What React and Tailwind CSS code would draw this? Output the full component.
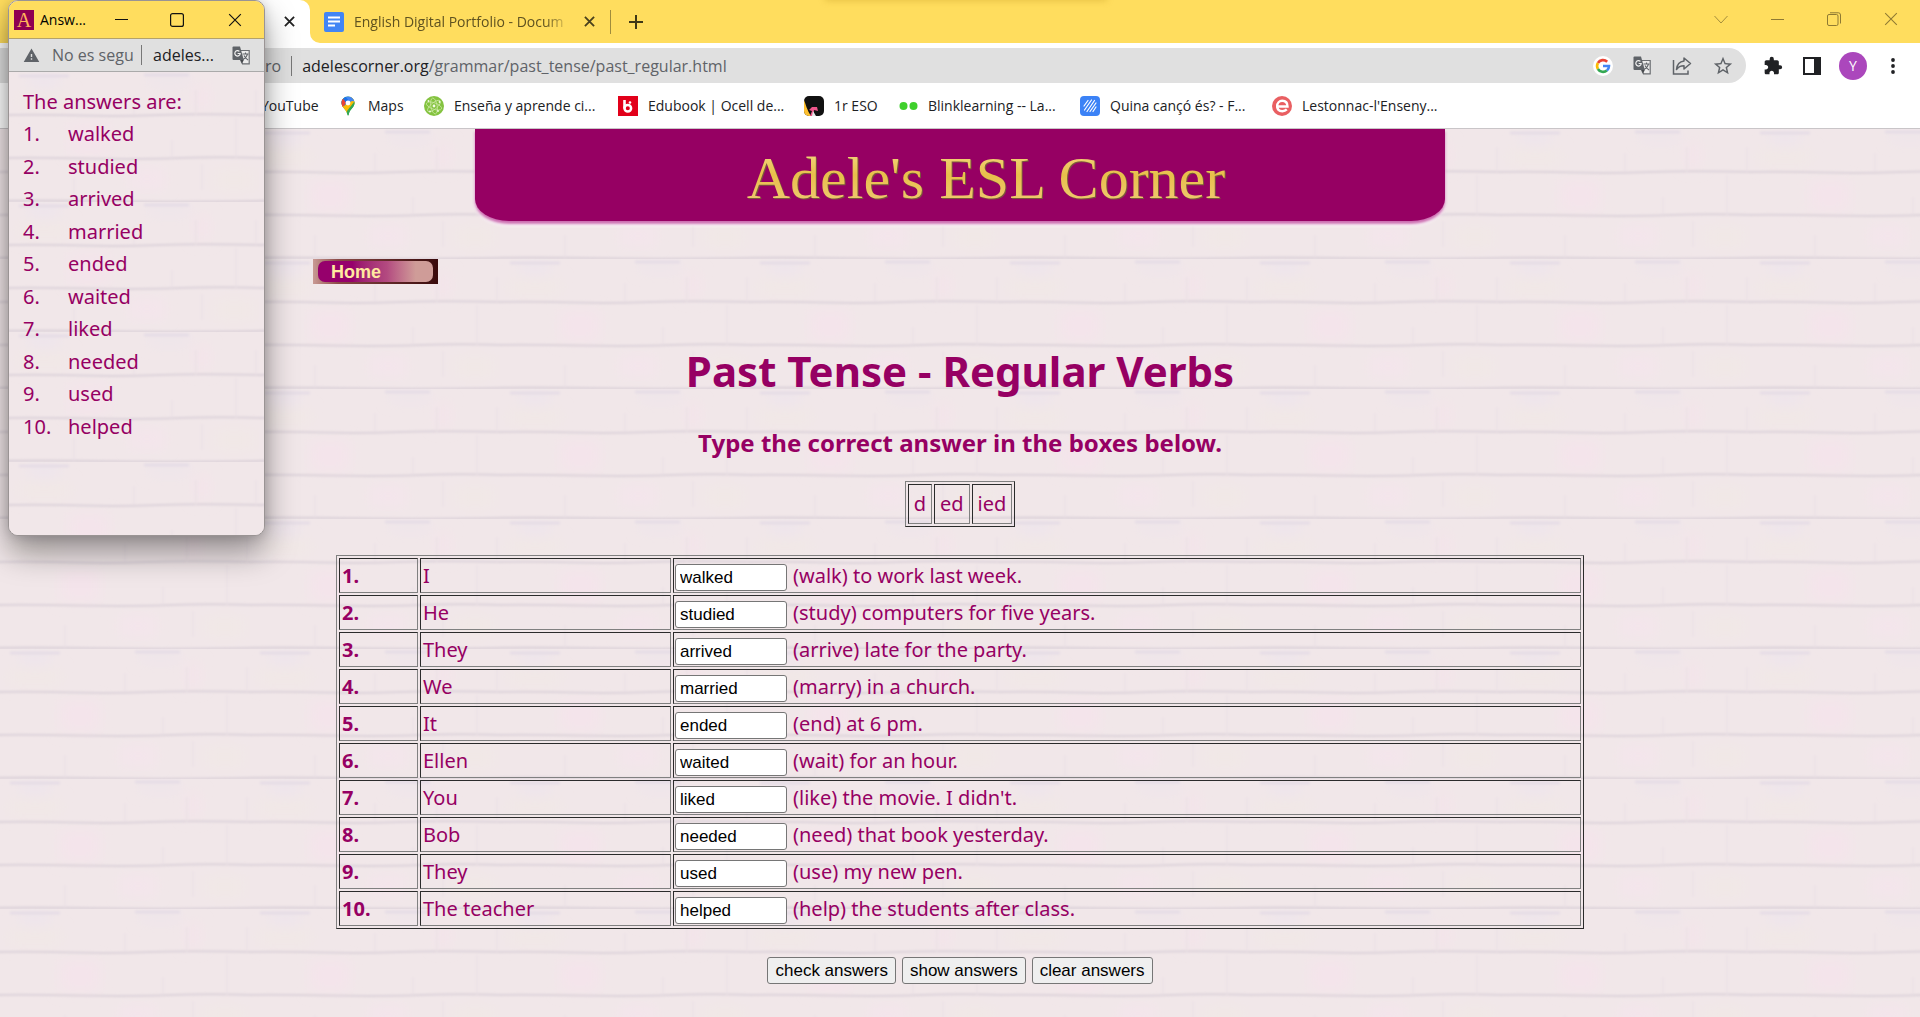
import React from 'react';
import { MdWarning, MdStarBorder, MdExtension } from 'react-icons/md';

const COMIC = "font-['Comic_Sans_MS','Noto_Sans',sans-serif]";
const UI = "font-['Segoe_UI','Open_Sans',sans-serif]";
const FORM = "font-['Liberation_Sans',Arial,sans-serif]";

const QUESTIONS = [
  ['I', 'walked', '(walk) to work last week.'],
  ['He', 'studied', '(study) computers for five years.'],
  ['They', 'arrived', '(arrive) late for the party.'],
  ['We', 'married', '(marry) in a church.'],
  ['It', 'ended', '(end) at 6 pm.'],
  ['Ellen', 'waited', '(wait) for an hour.'],
  ['You', 'liked', "(like) the movie. I didn't."],
  ['Bob', 'needed', '(need) that book yesterday.'],
  ['They', 'used', '(use) my new pen.'],
  ['The teacher', 'helped', '(help) the students after class.'],
];

/* Whitewashed brick wall used behind both documents. */
function Wall({ id }) {
  return (
    <svg className="absolute inset-0 h-full w-full" aria-hidden="true">
      <defs>
        <filter id={id + '-soft'} x="-5%" y="-5%" width="110%" height="110%">
          <feGaussianBlur stdDeviation="1.3" />
        </filter>
        <filter id={id + '-haze'} x="-50%" y="-50%" width="200%" height="200%">
          <feGaussianBlur stdDeviation="7" />
        </filter>
        <pattern id={id} width="250" height="130" patternUnits="userSpaceOnUse">
          <rect width="250" height="130" fill="#f1e7e9" />
          <g filter={`url(#${id}-haze)`}>
            <rect x="60" y="52" width="40" height="30" fill="#f4e4eb" />
            <rect x="186" y="14" width="14" height="24" fill="#f4e4ea" />
            <rect x="20" y="4" width="30" height="10" fill="#ede4ee" />
            <rect x="140" y="4" width="40" height="8" fill="#ede4ec" />
            <rect x="120" y="98" width="36" height="18" fill="#f4e5ec" />
            <rect x="205" y="98" width="40" height="20" fill="#f1e8e6" />
            <rect x="10" y="20" width="50" height="16" fill="#f1e8e6" />
          </g>
          <g filter={`url(#${id}-soft)`} fill="none" stroke="#ddd3da">
            <path d="M-5 43Q40 42.500 75 43.500T150 43T255 43" strokeWidth="2" />
            <path d="M-5 86Q30 85.500 80 86.500T170 86T255 86" strokeWidth="2" />
            <path d="M-5 129Q50 128.500 110 129.500T255 129" strokeWidth="2.500" />
            <path d="M10 4H60M135 3H180" strokeWidth="3" stroke="#e6dde6" />
            <g stroke="#e9dfe4" strokeWidth="1.200">
              <path d="M247 18V43M125 24V43M187 18V43M227 46V86M163 68V86M65 106V129M193 92V118" />
            </g>
          </g>
        </pattern>
      </defs>
      <rect width="100%" height="100%" fill={`url(#${id})`} />
    </svg>
  );
}

function Cross({ size = 12, width = 2, color = '#3c3a33' }) {
  return (
    <svg width={size} height={size} viewBox="0 0 12 12" stroke={color} strokeWidth={width} fill="none" aria-hidden="true">
      <path d="M1 1L11 11M11 1L1 11" />
    </svg>
  );
}

function TranslateIcon() {
  return (
    <svg width="19" height="19" viewBox="0 0 19 19" aria-hidden="true">
      <path d="M8 4.500H17.200V17.800H10.500L8 13" fill="#ececec" stroke="#6b6e72" strokeWidth="1.200" />
      <path d="M10.500 8H16.500M13.500 6.500V8M15.500 8C14.800 11 13 12.500 11 13.500M12 9.500C13 11.500 14.500 13 16 14" fill="none" stroke="#5f6368" strokeWidth="1.100" />
      <path d="M1.500 0.500H8L11.800 14H1.500Q0.500 14 0.500 13V1.500Q0.500 0.500 1.500 0.500Z" fill="#5f6368" />
      <path d="M8.600 14H11.800L10 17.600Z" fill="#44474b" />
      <path d="M7.400 5.400A2.700 2.700 0 1 0 8.200 7.500H5.600" fill="none" stroke="#f1f1f1" strokeWidth="1.200" />
    </svg>
  );
}

function DocsIcon() {
  return (
    <svg width="20" height="20" viewBox="0 0 20 20" aria-hidden="true">
      <rect width="20" height="20" rx="2" fill="#4285f4" />
      <path d="M4 5.500H16M4 9.500H16M4 13.500H11" stroke="#fff" strokeWidth="1.800" />
    </svg>
  );
}

function MapsIcon() {
  return (
    <svg width="20" height="20" viewBox="0 0 20 20" aria-hidden="true">
      <defs>
        <clipPath id="pin"><path d="M10 0.500C6 0.500 3.500 3.600 3.500 7C3.500 11.500 8.500 13 9.300 18.600C9.500 19.800 10.500 19.800 10.700 18.600C11.500 13 16.500 11.500 16.500 7C16.500 3.600 14 0.500 10 0.500Z" /></clipPath>
      </defs>
      <g clipPath="url(#pin)">
        <rect width="20" height="20" fill="#34a853" />
        <path d="M0 14L14 -2L20 -2L20 4L7 18L0 18Z" fill="#fbbc04" />
        <path d="M6 -1H20V6L14 5L10 7Z" fill="#4285f4" />
        <path d="M0 0H7L11 5L6 10L0 5Z" fill="#1a73e8" />
        <path d="M0 4L5.500 3L8 7L4 12L0 11Z" fill="#ea4335" />
        <path d="M20 5L16 6L9 15L10 20H20Z" fill="#34a853" />
      </g>
      <circle cx="10" cy="7" r="2.400" fill="#fff" />
    </svg>
  );
}

function AtomIcon() {
  return (
    <svg width="20" height="20" viewBox="0 0 20 20" aria-hidden="true">
      <circle cx="10" cy="10" r="10" fill="#84c340" />
      <g fill="none" stroke="#c9e6a0" strokeWidth="0.800">
        <ellipse cx="10" cy="10" rx="8" ry="3.200" transform="rotate(20 10 10)" />
        <ellipse cx="10" cy="10" rx="8" ry="3.200" transform="rotate(80 10 10)" />
        <ellipse cx="10" cy="10" rx="8" ry="3.200" transform="rotate(140 10 10)" />
      </g>
      <g fill="#f2fae4">
        <circle cx="10" cy="10" r="1.400" /><circle cx="4.500" cy="5" r="0.900" /><circle cx="15.500" cy="6" r="0.900" /><circle cx="6" cy="15.500" r="0.900" /><circle cx="14" cy="15" r="0.900" />
      </g>
    </svg>
  );
}

function EdubookIcon() {
  return (
    <svg width="20" height="20" viewBox="0 0 20 20" aria-hidden="true">
      <rect width="20" height="20" fill="#e2001a" />
      <path d="M6.500 4V12.500" stroke="#fff" strokeWidth="2.600" />
      <circle cx="9.800" cy="12.300" r="3.300" fill="none" stroke="#fff" strokeWidth="2.500" />
      <circle cx="12" cy="6.500" r="1.300" fill="#fff" />
    </svg>
  );
}

function EsoIcon() {
  return (
    <svg width="20" height="20" viewBox="0 0 20 20" aria-hidden="true">
      <defs><clipPath id="eso"><rect width="20" height="20" rx="5" /></clipPath></defs>
      <g clipPath="url(#eso)">
        <rect width="20" height="20" fill="#111" />
        <path d="M0 4C2 9 3 14 7 20H0Z" fill="#fdc02f" />
        <path d="M5 14L8 11L13 11L14 15L10 14L9 20H6L8 15Z" fill="#f0568c" />
        <path d="M9 15L12 20H8Z" fill="#e8e8e8" />
      </g>
    </svg>
  );
}

function BlinkIcon() {
  return (
    <svg width="20" height="20" viewBox="0 0 20 20" aria-hidden="true">
      <circle cx="5.500" cy="10" r="4" fill="#3fd02c" />
      <circle cx="15.500" cy="10" r="4" fill="#3fd02c" />
    </svg>
  );
}

function StripesIcon() {
  return (
    <svg width="20" height="20" viewBox="0 0 20 20" aria-hidden="true">
      <rect width="20" height="20" rx="4" fill="#3b82f6" />
      <path d="M4 10L8 4.500M4.500 14L11.500 4M7 15.500L14.500 4.500M10 15.500L16 7M13 15.500L16 11" stroke="#fff" strokeWidth="1.200" strokeLinecap="round" />
    </svg>
  );
}

function RoundEIcon() {
  return (
    <svg width="20" height="20" viewBox="0 0 20 20" aria-hidden="true">
      <circle cx="10" cy="10" r="10" fill="#e95f62" />
      <path d="M4 10.500H15.500C15.500 6.500 13 4.800 10.200 4.800C7.300 4.800 5.200 7 5.200 10C5.200 13.200 7.300 15.200 10.400 15.200C12.200 15.200 13.600 14.600 14.800 13.400" fill="none" stroke="#fff" strokeWidth="2.400" />
    </svg>
  );
}

function GoogleIcon() {
  return (
    <svg width="20" height="24" viewBox="0 0 20 24" aria-hidden="true">
      <circle cx="10" cy="12" r="10" fill="#fff" />
      <g fill="none" strokeWidth="2.600">
        <path d="M14.200 7.800A6 6 0 0 0 4.900 9" stroke="#ea4335" />
        <path d="M4.900 9A6 6 0 0 0 4.900 15" stroke="#fbbc04" />
        <path d="M4.900 15A6 6 0 0 0 13.900 16.500" stroke="#34a853" />
        <path d="M13.900 16.500A6 6 0 0 0 16 12H10" stroke="#4285f4" />
      </g>
    </svg>
  );
}

const BOOKMARKS = [
  ['Maps', MapsIcon, 'w-[86px]'],
  ['Enseña y aprende ci...', AtomIcon, 'w-[194px]'],
  ['Edubook | Ocell de...', EdubookIcon, 'w-[186px]'],
  ['1r ESO', EsoIcon, 'w-[94px]'],
  ['Blinklearning -- La...', BlinkIcon, 'w-[182px]'],
  ['Quina cançó és? - F...', StripesIcon, 'w-[192px]'],
  ["Lestonnac-l'Enseny...", RoundEIcon, 'w-[180px]'],
];

function TabStrip() {
  return (
    <div className="relative flex h-[43px] items-end bg-[#ffdd5e] text-[#5f5220]">
      <div className="absolute left-[43%] -top-2 h-2 w-[280px] shadow-[0_0_6px_1px_rgba(190,150,30,0.35)]" />
      <div className="ml-2 flex h-full w-[302px] items-center justify-end rounded-t-[10px] bg-white pr-[15px]">
        <button aria-label="Cerrar pestaña"><Cross size={11} color="#222" /></button>
      </div>
      <svg width="10" height="10" viewBox="0 0 10 10" className="shrink-0" aria-hidden="true"><path d="M0 0A10 10 0 0 0 10 10H0Z" fill="#fff" /></svg>
      <div className="flex h-full w-[290px] shrink-0 items-center gap-[10px] pl-1">
        <DocsIcon />
        <span className="w-[217px] overflow-hidden whitespace-nowrap text-sm [mask-image:linear-gradient(to_right,#000_88%,transparent)]">English Digital Portfolio - Docum</span>
        <button aria-label="Cerrar pestaña" className="ml-[3px]"><Cross size={11} color="#4a411d" /></button>
      </div>
      <div className="flex h-full items-center">
        <div className="h-6 w-px bg-[#a08c3c]" />
        <button aria-label="Nueva pestaña" className="ml-[17px]">
          <svg width="16" height="16" viewBox="0 0 16 16" stroke="#3f3816" strokeWidth="2" aria-hidden="true"><path d="M8 1V15M1 8H15" /></svg>
        </button>
      </div>
      <div className="ml-auto flex h-[37px] items-center gap-[43px] self-start pr-[22px]">
        <button aria-label="Buscar pestañas"><svg width="14" height="14" viewBox="0 0 14 14" fill="none" stroke="#a48d3c" aria-hidden="true"><path d="M0.500 4L7 11L13.500 4" /></svg></button>
        <button aria-label="Minimizar"><svg width="13" height="14" viewBox="0 0 13 14" stroke="#8f7a33" aria-hidden="true"><path d="M0 7.500H13" /></svg></button>
        <button aria-label="Restaurar"><svg width="14" height="14" viewBox="0 0 14 14" fill="none" stroke="#8f7a33" aria-hidden="true"><rect x="0.500" y="2.500" width="10.500" height="11" rx="1.500" /><path d="M3 0.800H11.500Q13.500 0.800 13.500 3V11.500" /></svg></button>
        <button aria-label="Cerrar"><Cross size={14} width={0.9} color="#8f7a33" /></button>
      </div>
    </div>
  );
}

function AddressRow() {
  return (
    <div className="flex h-[41px] items-center bg-white pr-[25px] pt-1">
      <div className="flex h-[35px] flex-1 items-center rounded-r-full bg-[#e0e0e0] pl-[265px] pr-3 text-[#5f6368]">
        <span className="text-base">ro</span>
        <span className="mx-[10px] h-5 w-px bg-[#777]" />
        <div className="flex-1 whitespace-nowrap text-base"><span className="text-[#202124]">adelescorner.org</span>/grammar/past_tense/past_regular.html</div>
        <div className="flex items-center gap-5">
          <button aria-label="Google"><GoogleIcon /></button>
          <button aria-label="Traducir"><TranslateIcon /></button>
          <button aria-label="Compartir">
            <svg width="20" height="20" viewBox="0 0 20 20" fill="none" stroke="#5f6368" strokeWidth="1.500" aria-hidden="true">
              <path d="M1.500 4V18H16V14.500" /><path d="M12 2L18.500 7.500L12 13V9.800C9 9.800 6.500 10.500 4.500 13.500C5 8.500 8 5.500 12 5Z" strokeLinejoin="round" />
            </svg>
          </button>
          <button aria-label="Añadir a marcadores"><MdStarBorder size={22} /></button>
        </div>
      </div>
      <div className="ml-[17px] flex items-center text-[#202124]">
        <button aria-label="Extensiones"><MdExtension size={20} /></button>
        <button aria-label="Panel lateral" className="ml-5">
          <svg width="18" height="18" viewBox="0 0 18 18" aria-hidden="true"><rect width="18" height="18" fill="#202124" /><rect x="2" y="2" width="9" height="14" fill="#fff" /></svg>
        </button>
        <button aria-label="Perfil" className="ml-[18px] flex h-7 w-7 items-center justify-center rounded-full bg-[#ab47bc] text-sm text-white">Y</button>
        <button aria-label="Menú" className="ml-6">
          <svg width="4" height="18" viewBox="0 0 4 18" fill="#202124" aria-hidden="true"><circle cx="2" cy="3" r="1.900" /><circle cx="2" cy="9" r="1.900" /><circle cx="2" cy="15" r="1.900" /></svg>
        </button>
      </div>
    </div>
  );
}

function Bookmarks() {
  return (
    <nav className="flex h-[45px] items-center border-b border-[#c9c5c8] bg-white pl-[261px] text-sm text-[#202124]">
      <a href="#youtube" className="w-[77px] shrink-0">YouTube</a>
      {BOOKMARKS.map(([name, Icon, width]) => (
        <a key={name} href="#bookmark" className={'flex shrink-0 items-center gap-[10px] whitespace-nowrap ' + width}>
          <Icon />
          {name}
        </a>
      ))}
    </nav>
  );
}

const CELL = 'border border-t-[#2b2b2b] border-l-[#2b2b2b] border-r-[#808080] border-b-[#808080]';
const TABLE = 'border border-separate border-spacing-[2px] border-t-[#808080] border-l-[#808080] border-r-[#2b2b2b] border-b-[#2b2b2b]';
const BUTTON = 'h-[27px] rounded-[3px] border border-[#767676] bg-[#efefef] px-[7px] text-[17px] leading-none text-black ' + FORM;

function Quiz() {
  return (
    <main className={'relative flex flex-1 flex-col text-[#960063] ' + COMIC}>
      <Wall id="wall" />
      <div className="relative flex flex-col items-center">
        <div className="flex h-[92px] w-[970px] justify-center bg-[#960063] pl-[52px] shadow-[0_3px_3px_rgba(190,70,155,0.8),0_5px_3px_#fff] [border-radius:0_0_34px_34px/0_0_22px_22px]">
          <p className="bg-gradient-to-b from-[#ffe9a8] via-[#e8bf4a] to-[#f3cf86] bg-clip-text pt-[17px] font-['Liberation_Serif',serif] text-[60px] leading-[64px] text-transparent drop-shadow-[1px_1px_0_#7a5a3a]">Adele's ESL Corner</p>
        </div>
        <div className="mt-[38px] w-full pl-[313px]">
          <a href="#home" className="flex h-[25px] w-[125px] bg-gradient-to-r from-[#c99a94] via-[#8c4a48] via-20% to-[#3a0a0c] p-[2px] pr-[5px] pl-[5px]">
            <span className={'flex flex-1 items-center rounded-[7px] bg-gradient-to-r from-[#96006c] from-30% via-[#b34a80] via-60% to-[#cf9c98] to-85% pl-[13px] text-lg font-bold leading-none text-[#ffe9a0] ' + FORM}>Home</span>
          </a>
        </div>
        <h1 className="mt-[58px] text-[42px] font-bold leading-[58px]">Past Tense - Regular Verbs</h1>
        <h2 className="mt-[27px] text-2xl font-bold leading-8">Type the correct answer in the boxes below.</h2>
        <table className={'mt-[22px] text-xl leading-[38px] ' + TABLE}>
          <tbody>
            <tr>
              <td className={'px-[5px] ' + CELL}>d</td>
              <td className={'px-[5px] ' + CELL}>ed</td>
              <td className={'px-[5px] ' + CELL}>ied</td>
            </tr>
          </tbody>
        </table>
        <table className={'mt-7 w-[65%] table-fixed text-xl leading-[33px] ' + TABLE}>
          <colgroup>
            <col className="w-[79px]" />
            <col className="w-[251px]" />
            <col />
          </colgroup>
          <tbody>
            {QUESTIONS.map(([subject, answer, rest], i) => (
              <tr key={answer} className="h-[35px]">
                <th scope="row" className={'px-[2px] text-left ' + CELL}>{i + 1}.</th>
                <td className={'px-[2px] ' + CELL}>{subject}</td>
                <td className={'px-px ' + CELL}>
                  <label className="flex h-[33px] items-center gap-[6px]">
                    <input defaultValue={answer} className={'mt-[3px] h-[27px] w-[112px] rounded-[3px] border border-[#767676] bg-white px-1 text-[17px] text-black ' + FORM} />
                    {rest}
                  </label>
                </td>
              </tr>
            ))}
          </tbody>
        </table>
        <div className="mt-7 flex gap-[6px]">
          <button className={BUTTON}>check answers</button>
          <button className={BUTTON}>show answers</button>
          <button className={BUTTON}>clear answers</button>
        </div>
      </div>
    </main>
  );
}

function AnswersWindow() {
  return (
    <section className="absolute left-2 top-0 flex h-[536px] w-[257px] flex-col overflow-hidden rounded-[10px] border border-[#9a9494] bg-[#f1e7e9] shadow-[0_16px_32px_rgba(0,0,0,0.4),0_0_12px_rgba(0,0,0,0.15)]">
      <header className="flex h-[38px] items-center border-b border-[#b4a26a] bg-[#ffdd5e] pl-[5px] text-black">
        <span className="flex h-5 w-5 items-center justify-center bg-[#8e0052] font-['Liberation_Serif',serif] text-xl leading-none text-[#ffb45a]">A</span>
        <span className="ml-[6px] w-[75px] text-sm">Answ...</span>
        <button aria-label="Minimizar"><svg width="13" height="13" viewBox="0 0 13 13" stroke="#111" aria-hidden="true"><path d="M0 6.500H13" /></svg></button>
        <button aria-label="Maximizar" className="ml-[42px]"><svg width="14" height="14" viewBox="0 0 14 14" fill="none" stroke="#111" strokeWidth="1.200" aria-hidden="true"><rect x="0.600" y="0.600" width="12.800" height="12.800" rx="2" /></svg></button>
        <button aria-label="Cerrar" className="ml-[44px]"><Cross size={14} width={1} color="#111" /></button>
      </header>
      <div className="flex h-[33px] items-center border-b border-[#aaa] bg-[#e0e0e0] pl-[14px] text-base text-[#5f6368]">
        <MdWarning size={17} />
        <span className="ml-[12px] w-[81px] overflow-hidden whitespace-nowrap">No es segu</span>
        <span className="ml-2 h-5 w-px bg-[#777]" />
        <span className="ml-[11px] w-[79px] text-[#202124]">adeles...</span>
        <button aria-label="Traducir"><TranslateIcon /></button>
      </div>
      <div className={'relative flex-1 pl-[14px] pt-[14px] text-xl leading-8 text-[#960063] ' + COMIC}>
        <Wall id="popup-wall" />
        <div className="relative">
          <p>The answers are:</p>
          <ol className="grid h-[325px] auto-rows-fr">
            {QUESTIONS.map(([, answer], i) => (
              <li key={answer} className="flex items-center">
                <span className="w-[45px]">{i + 1}.</span>
                {answer}
              </li>
            ))}
          </ol>
        </div>
      </div>
    </section>
  );
}

export default function App() {
  return (
    <div className={'relative flex h-screen flex-col overflow-hidden bg-[#f1e7e9] ' + UI}>
      <TabStrip />
      <AddressRow />
      <Bookmarks />
      <Quiz />
      <AnswersWindow />
    </div>
  );
}
